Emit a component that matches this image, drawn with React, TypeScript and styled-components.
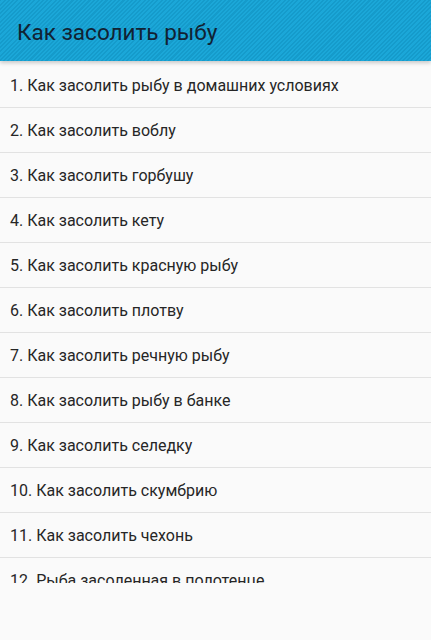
import React from "react";
import styled, { createGlobalStyle } from "styled-components";

const Global = createGlobalStyle`
  html, body { margin: 0; padding: 0; background: #fafafa; }
  body { font-family: Roboto, "Noto Sans", sans-serif; }
`;

const Screen = styled.div`
  width: 431px;
  height: 640px;
  display: flex;
  flex-direction: column;
  background: #fafafa;
  overflow: hidden;
`;

const Header = styled.header`
  height: 61px;
  flex: none;
  display: flex;
  align-items: center;
  padding: 0 17px;
  background-color: #19a4d5;
  background-image: repeating-linear-gradient(
    -45deg,
    #1ba7d8 0px,
    #1ba7d8 1.5px,
    #159bcb 1.5px,
    #159bcb 3px
  );
  box-shadow: 0 2px 4px rgba(0, 0, 0, 0.2);
  position: relative;
  z-index: 1;
`;

const Title = styled.h1`
  margin: 0;
  font-family: Roboto, sans-serif;
  font-weight: 400;
  font-size: 22.5px;
  color: #112233;
  padding-top: 2px;
`;

const List = styled.ul`
  list-style: none;
  margin: 0;
  padding: 2px 0 0;
  height: 520px;
  flex: none;
  overflow: hidden;
`;

const Row = styled.li`
  height: 44px;
  display: flex;
  align-items: center;
  padding: 0 10px;
  border-bottom: 1px solid #e2e2e2;
  font-family: Roboto, sans-serif;
  font-size: 16px;
  color: #262626;
  white-space: nowrap;
`;

const items = [
  "1. Как засолить рыбу в домашних условиях",
  "2. Как засолить воблу",
  "3. Как засолить горбушу",
  "4. Как засолить кету",
  "5. Как засолить красную рыбу",
  "6. Как засолить плотву",
  "7. Как засолить речную рыбу",
  "8. Как засолить рыбу в банке",
  "9. Как засолить селедку",
  "10. Как засолить скумбрию",
  "11. Как засолить чехонь",
  "12. Рыба засоленная в полотенце",
];

export default function App() {
  return (
    <Screen>
      <Global />
      <Header>
        <Title>Как засолить рыбу</Title>
      </Header>
      <List>
        {items.map((t) => (
          <Row key={t}>{t}</Row>
        ))}
      </List>
    </Screen>
  );
}
